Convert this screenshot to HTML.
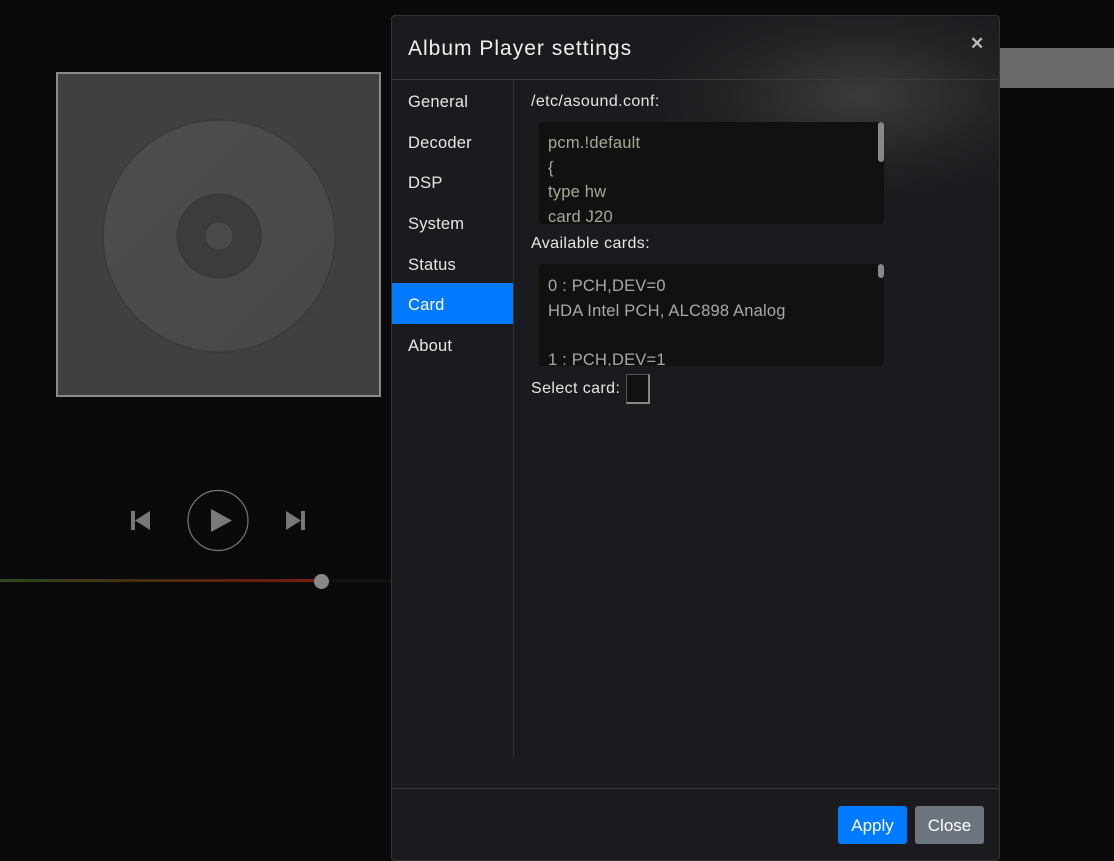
<!DOCTYPE html>
<html><head><meta charset="utf-8"><style>
*{box-sizing:border-box;margin:0;padding:0}
body{width:1114px;height:861px;background:#0a0a0c;font-family:"Liberation Sans",sans-serif;position:relative;overflow:hidden;color:#e8e8e8}
.abs{position:absolute}
.art{left:56px;top:72px;width:325px;height:325px;background:#404040;border:2px solid #8a8a8a}
.modal{left:391px;top:15px;width:609px;height:846px;background:#1b1b1f;border:1px solid #333;border-radius:4px;overflow:hidden}
.glow{left:240px;top:-30px;width:460px;height:220px;background:radial-gradient(ellipse at center,rgba(90,90,90,.5),rgba(60,60,60,.2) 45%,rgba(0,0,0,0) 70%)}
.title{left:16px;top:21px;font-size:21px;color:#f0f0f0;letter-spacing:1px}
.x{left:578px;top:18px;font-size:17px;font-weight:bold;color:#bbb}
.hline{left:0;top:63px;width:609px;height:1px;background:#3a3a3e}
.side{left:0;top:64px;width:122px;height:678px;border-right:1px solid #333}
.side div{height:40.7px;line-height:44px;padding-left:16px;font-size:16.5px;color:#e6e6e6;letter-spacing:.2px}
.side .act{background:#007bff;color:#fff}
.lbl{font-size:16px;color:#e6e6e6;letter-spacing:.4px}
.ta{background:#111;border-radius:3px;width:345px;height:102px;padding:9px 0 0 9px;font-size:16.5px;line-height:24.5px;color:#a8a8a8;overflow:hidden;letter-spacing:.2px}
.sb{right:0;width:6px;border-radius:3px;background:#888}
.btn{top:790px;height:38px;border-radius:3px;font-size:17px;line-height:40px;text-align:center;color:#fff}
</style></head><body>
<div class="abs art">
<svg width="321" height="321" viewBox="0 0 321 321">
<defs><linearGradient id="g" x1="0" y1="0" x2="1" y2="1"><stop offset="0" stop-color="#4e4e4e"/><stop offset=".5" stop-color="#4a4a4a"/><stop offset="1" stop-color="#474747"/></linearGradient></defs>
<circle cx="161" cy="162" r="116" fill="url(#g)" stroke="#3a3a3a" stroke-width="1.5"/>
<circle cx="161" cy="162" r="42" fill="#3c3c3c" stroke="#363636" stroke-width="1"/>
<circle cx="161" cy="162" r="14" fill="#494949" stroke="#393939" stroke-width="1"/>
</svg></div>
<svg class="abs" style="left:120px;top:485px" width="200" height="70">
<rect x="11" y="26" width="4" height="19" fill="#777"/><polygon points="15,35.5 30,26 30,45" fill="#777"/>
<circle cx="98" cy="35.5" r="30" fill="none" stroke="#777" stroke-width="1.2"/>
<polygon points="91,24 112,35.5 91,47" fill="#7a7a7a"/>
<polygon points="166,26 181,35.5 166,45" fill="#777"/><rect x="181" y="26" width="4" height="19" fill="#777"/>
</svg>
<div class="abs" style="left:0;top:579px;width:391px;height:3px;background:#111"></div>
<div class="abs" style="left:0;top:579px;width:321px;height:3px;background:linear-gradient(90deg,#2e4a1c,#4a2a10 50%,#7a1a10)"></div>
<div class="abs" style="left:314px;top:574px;width:15px;height:15px;border-radius:50%;background:#888"></div>
<div class="abs" style="left:999px;top:48px;width:115px;height:40px;background:#6a6a6a"></div>
<div class="abs modal">
<div class="abs glow"></div>
<div class="abs title">Album Player settings</div>
<div class="abs x">✕</div>
<div class="abs hline"></div>
<div class="abs side">
<div>General</div><div>Decoder</div><div>DSP</div><div>System</div><div>Status</div><div class="act">Card</div><div>About</div>
</div>
<div class="abs lbl" style="left:139px;top:77px">/etc/asound.conf:</div>
<div class="abs ta" style="left:147px;top:106px;color:#a8a898">pcm.!default<br>{<br>type hw<br>card J20<div class="abs sb" style="top:0;right:0;height:40px"></div></div>
<div class="abs lbl" style="left:139px;top:219px">Available cards:</div>
<div class="abs ta" style="left:147px;top:248px;padding-top:10px">0 : PCH,DEV=0<br>HDA Intel PCH, ALC898 Analog<br><br>1 : PCH,DEV=1<div class="abs sb" style="top:0;right:0;height:14px"></div></div>
<div class="abs lbl" style="left:139px;top:364px">Select card:</div>
<div class="abs" style="left:234px;top:358px;width:24px;height:30px;background:#111;border:1px solid #555;border-right:2px solid #888;border-bottom:2px solid #888"></div>
<div class="abs" style="left:0;top:772px;width:609px;height:1px;background:#3a3a3e"></div>
<div class="abs btn" style="left:446px;width:69px;background:#007bff">Apply</div>
<div class="abs btn" style="left:523px;width:69px;background:#6c757d">Close</div>
</div>
</body></html>
